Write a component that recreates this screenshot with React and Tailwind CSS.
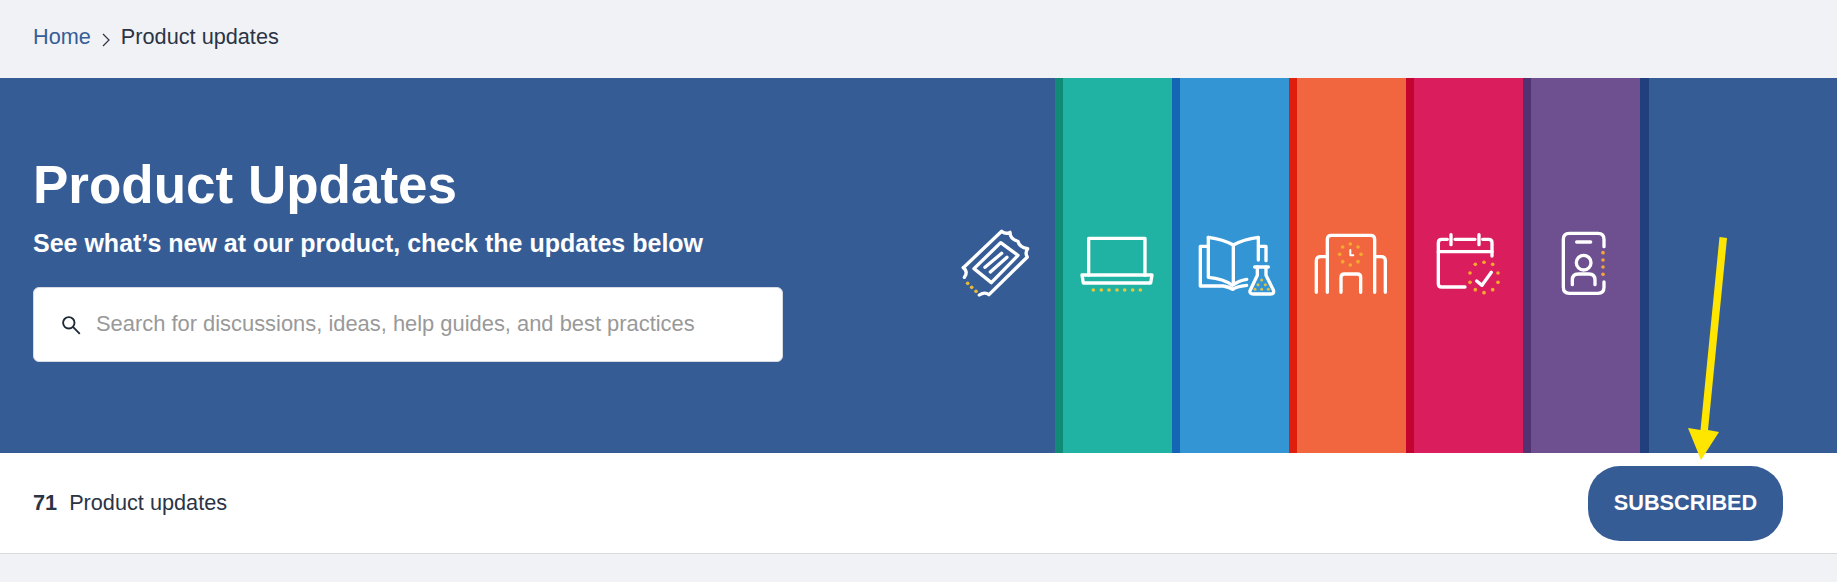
const Dots = ({ pts, fill = '#f5a92f', r = 5.5 }) => (
  <>
    {pts.map(([x, y]) => (
      <circle key={`${x}-${y}`} cx={x} cy={y} r={r} fill={fill} stroke="none" />
    ))}
  </>
);

// icons are drawn in 3x coordinates, each viewBox is 109x80 real pixels
const Icon = ({ x, children }) => (
  <svg
    viewBox={`${x} 69 327 240`}
    className="w-[109px] h-20 mb-[5px]"
    fill="none"
    stroke="#fff"
    strokeWidth="10"
    strokeLinecap="round"
    strokeLinejoin="round"
  >
    {children}
  </svg>
);

const Strip = ({ edge, color, children }) => (
  <div className={`flex ${color}`}>
    <div className={`w-2 ${edge}`}></div>
    <div className="w-[109px] flex items-center">{children}</div>
  </div>
);

const TicketIcon = () => (
  <Icon x={48}>
    <path d="M100 203 L215 94 Q228 104 240 97 Q240 118 264 124 Q268 142 293 146 Q284 158 292 171 L177 284 Q164 274 148 285" />
    <path d="M100 203 Q116 216 103 232" />
    <path d="M132 206 L212 128 L264 166 L184 248 Z" />
    <path d="M165 202 L215 160 M181 216 L231 172" />
    <Dots pts={[[113, 250], [125, 262], [138, 274]]} fill="#e6b93a" />
  </Icon>
);

const LaptopIcon = () => (
  <Icon x={399}>
    <path d="M476 225 V115 H645 V225" />
    <path d="M456 225 H666 L662 249 H460 Z" />
    <Dots pts={[[490, 270], [514, 270], [537, 270], [561, 270], [584, 270], [608, 270], [631, 270]]} fill="#e6c93a" />
  </Icon>
);

const BookIcon = () => (
  <Icon x={750}>
    <path d="M835 112 Q880 118 910 135 Q940 118 985 112 V180" />
    <path d="M835 112 V232 Q880 236 908 256 Q925 242 950 238" />
    <path d="M910 135 V250" />
    <path d="M832 139 H811 V258 H880 Q900 262 908 268 Q918 260 950 256" />
    <path d="M988 139 H1008 V182" />
    <path d="M974 201 H1015" />
    <path d="M982 201 V226 L960 272 Q958 282 970 282 H1022 Q1034 282 1030 270 L1008 226 V201" />
    <Dots pts={[[995, 240], [984, 254], [1006, 254], [975, 268], [995, 268], [1015, 268]]} fill="#d9c24a" r={4.5} />
  </Icon>
);

const BuildingIcon = () => (
  <Icon x={51}>
    <path d="M142 277 V118 Q142 106 154 106 H272 Q284 106 284 118 V277" />
    <path d="M142 170 H122 Q109 170 109 182 V277" />
    <path d="M284 170 H303 Q316 170 316 182 V277" />
    <path d="M183 277 V232 Q183 222 193 222 H232 Q242 222 242 232 V277" />
    <path d="M211 150 V166 H220" strokeWidth="6" />
    <Dots pts={[[211, 132], [234, 141], [243, 163], [234, 185], [211, 195], [188, 185], [179, 163], [188, 141]]} />
  </Icon>
);

const CalendarIcon = () => (
  <Icon x={402}>
    <path d="M555 261 H485 Q475 261 475 251 V128 Q475 118 485 118 H502" />
    <path d="M525 118 H585 M608 118 H626 Q636 118 636 128 V168" />
    <path d="M513 104 V134 M597 104 V134" />
    <path d="M475 155 H636" />
    <path d="M590 243 L606 256 L634 217" />
    <Dots pts={[[612, 187], [638, 193], [654, 219], [654, 247], [638, 269], [612, 278], [586, 269], [570, 247], [570, 219], [586, 193]]} />
  </Icon>
);

const BadgeIcon = () => (
  <Icon x={756}>
    <path d="M975 140 V118 Q975 100 957 100 H871 Q853 100 853 118 V262 Q853 280 871 280 H957 Q975 280 975 262 V246" />
    <path d="M893 126 H935" />
    <circle cx="914" cy="188" r="22" />
    <path d="M880 254 V240 Q880 222 898 222 H930 Q948 222 948 240 V254" />
    <Dots pts={[[972, 158], [972, 180], [972, 201], [972, 223]]} fill="#f0a63a" />
  </Icon>
);

export default function App() {
  return (
    <div className="min-h-[582px] bg-[#f0f2f6] font-['Liberation_Sans',Arial,sans-serif] text-[#2b3445] overflow-hidden">
      <nav className="h-[78px] px-[33px] pb-[3px] flex items-center gap-[11px] text-[21.7px]">
        <a className="text-[#365d96]">Home</a>
        <svg viewBox="0 0 8 14" className="w-2 h-[14px] mt-[5px]" fill="none" stroke="#2b3445" strokeWidth="1.2">
          <path d="M1 1 L7 7 L1 13" />
        </svg>
        <span>Product updates</span>
      </nav>

      <section className="relative h-[375px] bg-[#365c96] flex justify-between">
        <div className="pl-[33px] pt-[72px] w-[816px]">
          <h1 className="text-[53px] leading-[70px] font-bold text-white">Product Updates</h1>
          <p className="text-[25px] leading-[30px] font-bold text-white mt-[8px]">See what’s new at our product, check the updates below</p>
          <div className="mt-[29px] w-[750px] h-[75px] bg-white rounded-md flex items-center pl-[26px] gap-[14px] border border-[#d6dae2]">
            <svg viewBox="0 0 20 20" className="w-[22px] h-[22px]" fill="none" stroke="#1f2937" strokeWidth="1.7">
              <circle cx="8" cy="8" r="5.2" />
              <path d="M12 12 L18 18" />
            </svg>
            <span className="text-[#999] text-[21.9px]">Search for discussions, ideas, help guides, and best practices</span>
          </div>
        </div>

        <div className="flex">
          <div className="flex items-center"><TicketIcon /></div>
          <Strip edge="bg-[#108b75]" color="bg-[#20b2a3]"><LaptopIcon /></Strip>
          <Strip edge="bg-[#1565b5]" color="bg-[#3495d5]"><BookIcon /></Strip>
          <Strip edge="bg-[#e01e0e]" color="bg-[#f1663e]"><BuildingIcon /></Strip>
          <Strip edge="bg-[#c2042f]" color="bg-[#da1d5c]"><CalendarIcon /></Strip>
          <Strip edge="bg-[#533272]" color="bg-[#6e5090]"><BadgeIcon /></Strip>
          <div className="w-[197px] flex">
            <div className="w-[9px] bg-[#213f7c]"></div>
          </div>
        </div>

        <svg viewBox="0 0 50 225" className="absolute left-[1680px] top-[159px] w-[50px] h-[225px] z-10" fill="#ffe600">
          <path d="M39.5 0 L47 1 L28 193 L39 195 L21 223 L8 191 L20.5 193 Z" />
        </svg>
      </section>

      <div className="h-[101px] bg-white border-b border-[#d8dade] pl-[33px] pr-[54px] flex items-center justify-between">
        <div className="text-[21.7px]">
          <span className="font-bold mr-[12px]">71</span>
          <span>Product updates</span>
        </div>
        <button className="w-[195px] h-[75px] rounded-[32px] bg-[#365c96] text-white font-bold text-[21.7px]">SUBSCRIBED</button>
      </div>
    </div>
  );
}
